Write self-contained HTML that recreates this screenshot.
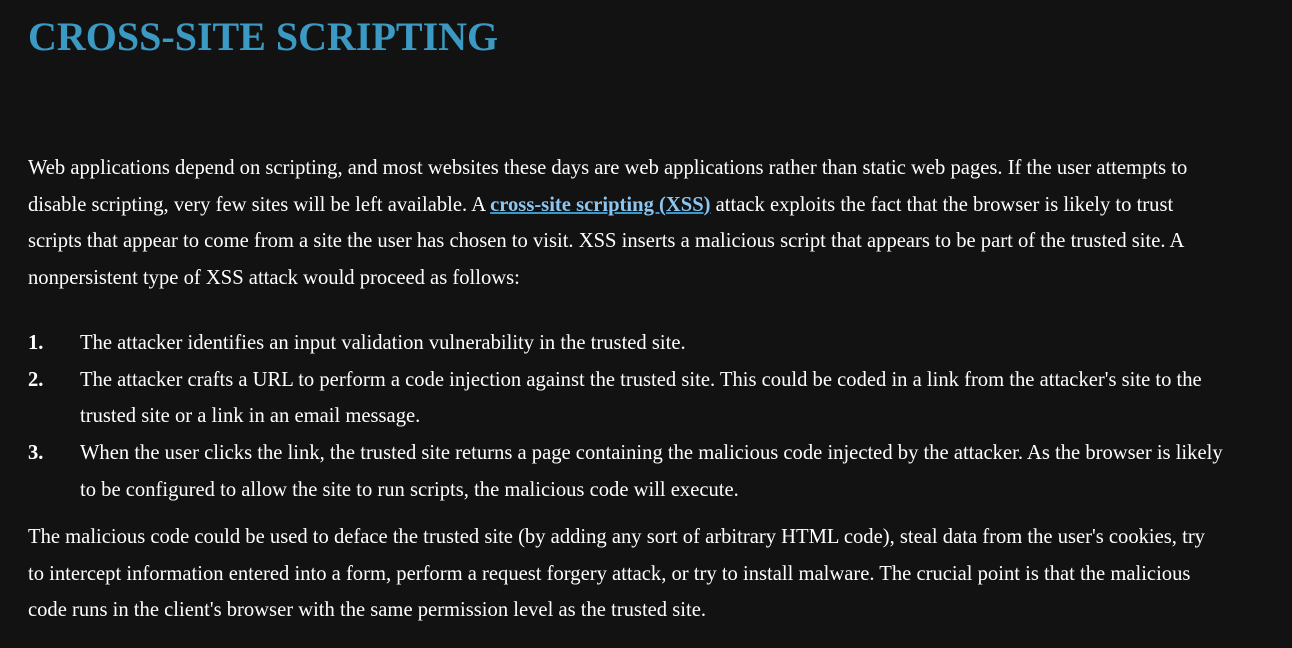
<!DOCTYPE html>
<html><head><meta charset="utf-8"><style>
html,body{margin:0;padding:0;background:#121212;width:1292px;height:648px;overflow:hidden}
body{font-family:"Liberation Serif",serif;color:#fff;font-size:20.6px;line-height:36.7px}
h1{position:absolute;left:28px;top:13px;margin:0;font-size:40px;line-height:48px;color:#3a9ac4;font-weight:bold}
.p1{position:absolute;left:28px;top:150px;width:1260px;margin:0;white-space:nowrap}
.p2{position:absolute;left:28px;top:519px;width:1260px;margin:0;white-space:nowrap}
a{color:#8cc6f2;font-weight:bold;text-decoration:underline;text-decoration-color:#3a9ac4;text-decoration-thickness:2px}
ol{position:absolute;left:28px;top:325px;width:1260px;margin:0;padding:0;list-style:none;white-space:nowrap}
li{position:relative;padding-left:52px}
li b{position:absolute;left:0;top:0}
</style></head><body>
<h1>CROSS-SITE SCRIPTING</h1>
<p class="p1">Web applications depend on scripting, and most websites these days are web applications rather than static web pages. If the user attempts to<br>disable scripting, very few sites will be left available. A <a>cross-site scripting (XSS)</a> attack exploits the fact that the browser is likely to trust<br>scripts that appear to come from a site the user has chosen to visit. XSS inserts a malicious script that appears to be part of the trusted site. A<br>nonpersistent type of XSS attack would proceed as follows:</p>
<ol>
<li><b>1.</b>The attacker identifies an input validation vulnerability in the trusted site.</li>
<li><b>2.</b>The attacker crafts a URL to perform a code injection against the trusted site. This could be coded in a link from the attacker's site to the<br>trusted site or a link in an email message.</li>
<li><b>3.</b>When the user clicks the link, the trusted site returns a page containing the malicious code injected by the attacker. As the browser is likely<br>to be configured to allow the site to run scripts, the malicious code will execute.</li>
</ol>
<p class="p2">The malicious code could be used to deface the trusted site (by adding any sort of arbitrary HTML code), steal data from the user's cookies, try<br>to intercept information entered into a form, perform a request forgery attack, or try to install malware. The crucial point is that the malicious<br>code runs in the client's browser with the same permission level as the trusted site.</p>
</body></html>
